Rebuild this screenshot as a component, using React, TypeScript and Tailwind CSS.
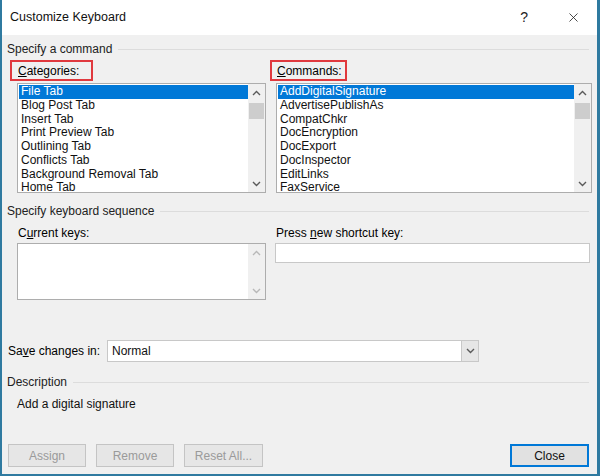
import { X } from "lucide-react"

const categories = [
  "File Tab",
  "Blog Post Tab",
  "Insert Tab",
  "Print Preview Tab",
  "Outlining Tab",
  "Conflicts Tab",
  "Background Removal Tab",
  "Home Tab",
]

const commands = [
  "AddDigitalSignature",
  "AdvertisePublishAs",
  "CompatChkr",
  "DocEncryption",
  "DocExport",
  "DocInspector",
  "EditLinks",
  "FaxService",
]

const Chevron = ({ up, light }: { up?: boolean; light?: boolean }) => (
  <svg width="9" height="6" viewBox="0 0 9 6" className={up ? "" : "rotate-180"}>
    <path d="M1 5 L4.5 1.5 L8 5" fill="none" stroke={light ? "#b8b8b8" : "#5a5a5a"} strokeWidth="1.4" />
  </svg>
)

const ScrollBar = ({ light }: { light?: boolean }) => (
  <div className="w-[17px] h-full flex flex-col items-center bg-[#f0f0f0]">
    <div className="h-[17px] flex items-center justify-center">
      <Chevron up light={light} />
    </div>
    {light ? (
      <div className="flex-1" />
    ) : (
      <>
        <div className="w-[15px] h-[16px] mt-[2px] bg-[#cdcdcd]" />
        <div className="flex-1" />
      </>
    )}
    <div className="h-[17px] flex items-center justify-center">
      <Chevron light={light} />
    </div>
  </div>
)

const ListBox = ({ items, width }: { items: string[]; width: string }) => (
  <div className={`${width} h-[110px] bg-white border border-[#adadad] flex`}>
    <div className="flex-1 flex flex-col pt-[1px] pl-[1px]">
      {items.map((item, i) => (
        <div
          key={item}
          className={`h-[13.75px] leading-[13.75px] pl-[2px] ${i === 0 ? "bg-[#0078d7] text-white" : "text-[#111]"}`}
        >
          {item}
        </div>
      ))}
    </div>
    <ScrollBar />
  </div>
)

const SectionHeader = ({ title }: { title: string }) => (
  <div className="flex items-center h-[16px] pl-[5px] pr-[8px] gap-[6px]">
    <span className="text-[#222] whitespace-nowrap">{title}</span>
    <div className="flex-1 h-px bg-[#dcdcdc]" />
  </div>
)

const Button = ({ label, w, primary }: { label: string; w: string; primary?: boolean }) => (
  <div
    className={`${w} h-[23px] flex items-center justify-center ${
      primary
        ? "border-2 border-[#0078d7] bg-[#e1e1e1] text-[#111]"
        : "border border-[#c4c4c4] bg-[#e6e6e6] text-[#9a9a9a]"
    }`}
  >
    {label}
  </div>
)

export default function App() {
  return (
    <div
      className="w-[600px] h-[476px] bg-[#f0f0f0] border-l-2 border-r-[3px] border-b-2 border-[#2f7aa0] flex flex-col text-[12px] overflow-hidden"
      style={{ fontFamily: '"Liberation Sans", Arial, sans-serif' }}
    >
      {/* Title bar */}
      <div className="h-[35px] bg-white flex items-center pl-[8px] shrink-0">
        <span className="text-[12.5px] text-[#111]">Customize Keyboard</span>
        <div className="flex-1" />
        <span className="text-[14px] text-[#222] mr-[38px]">?</span>
        <X className="w-[15px] h-[15px] text-[#222] mr-[16px]" strokeWidth={1.3} />
      </div>

      {/* Specify a command */}
      <div className="mt-[6px]">
        <SectionHeader title="Specify a command" />
      </div>

      <div className="flex mt-[3px] pl-[15px]">
        <div className="flex flex-col">
          <div className="-ml-[7px] w-[83px] h-[21px] border-2 border-[#e0393e] flex items-center pl-[6px]">
            <span>
              <span className="underline">C</span>ategories:
            </span>
          </div>
          <div className="mt-[2px]">
            <ListBox items={categories} width="w-[249px]" />
          </div>
        </div>
        <div className="flex flex-col ml-[10px]">
          <div className="-ml-[6px] w-[77px] h-[21px] border-2 border-[#e0393e] flex items-center pl-[5px]">
            <span>
              <span className="underline">C</span>ommands:
            </span>
          </div>
          <div className="mt-[2px]">
            <ListBox items={commands} width="w-[316px]" />
          </div>
        </div>
      </div>

      {/* Specify keyboard sequence */}
      <div className="mt-[10px]">
        <SectionHeader title="Specify keyboard sequence" />
      </div>

      <div className="flex mt-[6px] pl-[15px]">
        <div className="flex flex-col">
          <div className="h-[16px] flex items-center pl-[1px]">
            <span>
              C<span className="underline">u</span>rrent keys:
            </span>
          </div>
          <div className="mt-[2px] w-[249px] h-[57px] bg-white border border-[#adadad] flex justify-end">
            <ScrollBar light />
          </div>
        </div>
        <div className="flex flex-col ml-[9px]">
          <div className="h-[16px] flex items-center pl-[1px]">
            <span>
              Press <span className="underline">n</span>ew shortcut key:
            </span>
          </div>
          <div className="mt-[2px] w-[315px] h-[20px] bg-white border border-[#c8c8c8]" />
        </div>
      </div>

      {/* Save changes in */}
      <div className="flex items-center mt-[40px] pl-[6px]">
        <span className="w-[99px]">
          Sa<span className="underline">v</span>e changes in:
        </span>
        <div className="w-[372px] h-[22px] bg-white border border-[#c8c8c8] flex items-center">
          <span className="flex-1 pl-[4px] text-[#111]">Normal</span>
          <div className="w-[17px] h-full bg-[#e6e6e6] border-l border-[#c8c8c8] flex items-center justify-center">
            <Chevron />
          </div>
        </div>
      </div>

      {/* Description */}
      <div className="mt-[12px]">
        <SectionHeader title="Description" />
      </div>
      <div className="h-[16px] flex items-center mt-[6px] pl-[15px] text-[#111]">Add a digital signature</div>

      {/* Buttons */}
      <div className="flex items-center mt-[32px] pl-[6px] pr-[8px]">
        <Button label="Assign" w="w-[78px]" />
        <div className="ml-[10px]">
          <Button label="Remove" w="w-[78px]" />
        </div>
        <div className="ml-[10px]">
          <Button label="Reset All..." w="w-[79px]" />
        </div>
        <div className="flex-1" />
        <Button label="Close" w="w-[79px]" primary />
      </div>
    </div>
  )
}
